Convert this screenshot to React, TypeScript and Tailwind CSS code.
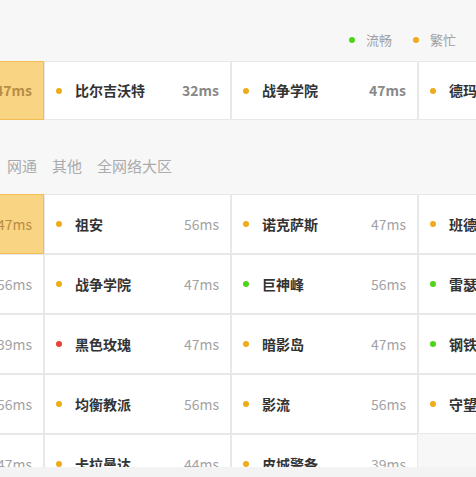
import React from 'react'

type Status = 'ok' | 'busy' | 'full'

interface Server {
  name: string
  ms: string
  status: Status
}

const dotColor: Record<Status, string> = {
  ok: 'bg-[#4fd41c]',
  busy: 'bg-[#f0ab1c]',
  full: 'bg-[#ee3f3a]',
}

const topRow: Server[] = [
  { name: '艾欧尼亚', ms: '47ms', status: 'busy' },
  { name: '比尔吉沃特', ms: '32ms', status: 'busy' },
  { name: '战争学院', ms: '47ms', status: 'busy' },
  { name: '德玛西亚', ms: '47ms', status: 'busy' },
]

const grid: Server[][] = [
  [
    { name: '艾欧尼亚', ms: '47ms', status: 'busy' },
    { name: '祖安', ms: '56ms', status: 'busy' },
    { name: '诺克萨斯', ms: '47ms', status: 'busy' },
    { name: '班德尔城', ms: '47ms', status: 'busy' },
  ],
  [
    { name: '皮尔特沃夫', ms: '56ms', status: 'busy' },
    { name: '战争学院', ms: '47ms', status: 'busy' },
    { name: '巨神峰', ms: '56ms', status: 'ok' },
    { name: '雷瑟守备', ms: '47ms', status: 'ok' },
  ],
  [
    { name: '裁决之地', ms: '39ms', status: 'busy' },
    { name: '黑色玫瑰', ms: '47ms', status: 'full' },
    { name: '暗影岛', ms: '47ms', status: 'busy' },
    { name: '钢铁烈阳', ms: '47ms', status: 'ok' },
  ],
  [
    { name: '水晶之痕', ms: '56ms', status: 'busy' },
    { name: '均衡教派', ms: '56ms', status: 'busy' },
    { name: '影流', ms: '56ms', status: 'busy' },
    { name: '守望之海', ms: '47ms', status: 'busy' },
  ],
  [
    { name: '征服之海', ms: '47ms', status: 'busy' },
    { name: '卡拉曼达', ms: '44ms', status: 'busy' },
    { name: '皮城警备', ms: '39ms', status: 'busy' },
  ],
]

function ServerCell({ server, selected, bold, height }: { server: Server; selected?: boolean; bold?: boolean; height: string }) {
  if (selected) {
    return (
      <div className={`${height} w-[187px] shrink-0 flex items-center justify-end px-[11px] border border-[#f2bd55] bg-[#f9d482]`}>
        <span className={`text-[14px] text-[#b88c45] ${bold ? 'font-bold' : ''}`}>{server.ms}</span>
      </div>
    )
  }
  return (
    <div className={`${height} w-[187px] shrink-0 flex items-center px-[11px] border border-[#e8e8e8] bg-white`}>
      <span className={`h-[6px] w-[6px] rounded-full ${dotColor[server.status]}`} />
      <span className="ml-[13px] text-[14px] font-bold text-[#333]">{server.name}</span>
      <span className={`ml-auto text-[14px] ${bold ? 'font-bold text-[#888]' : 'text-[#a3a3a3]'}`}>{server.ms}</span>
    </div>
  )
}

export default function App() {
  return (
    <div
      className="relative w-[476px] h-[477px] overflow-hidden bg-[#f7f7f8]"
      style={{ fontFamily: '"Noto Sans CJK SC", "Noto Sans", sans-serif' }}
    >
      <div className="flex justify-end items-center gap-[21px] pt-[31px] pr-[20px] h-[49px] text-[13px] leading-[18px] text-[#a0a0a0]">
        <div className="flex items-center gap-[11px]">
          <span className="h-[6px] w-[6px] rounded-full bg-[#4fd41c]" />
          <span>流畅</span>
        </div>
        <div className="flex items-center gap-[11px]">
          <span className="h-[6px] w-[6px] rounded-full bg-[#f0ab1c]" />
          <span>繁忙</span>
        </div>
      </div>

      <div className="mt-[12px] ml-[-143px] flex">
        {topRow.map((s, i) => (
          <ServerCell key={i} server={s} selected={i === 0} bold height="h-[59px]" />
        ))}
      </div>

      <div className="h-[74px] pt-[36px] pl-[7px] flex gap-[15px] text-[15px] leading-[20px] text-[#ababab]">
        <span>网通</span>
        <span>其他</span>
        <span>全网络大区</span>
      </div>

      <div className="ml-[-143px] flex flex-col">
        {grid.map((row, r) => (
          <div key={r} className="flex">
            {row.map((s, i) => (
              <ServerCell key={i} server={s} selected={r === 0 && i === 0} height="h-[60px]" />
            ))}
          </div>
        ))}
      </div>

      <div className="absolute left-0 right-0 bottom-0 h-[10px] bg-[#f3f3f4]" />
    </div>
  )
}
